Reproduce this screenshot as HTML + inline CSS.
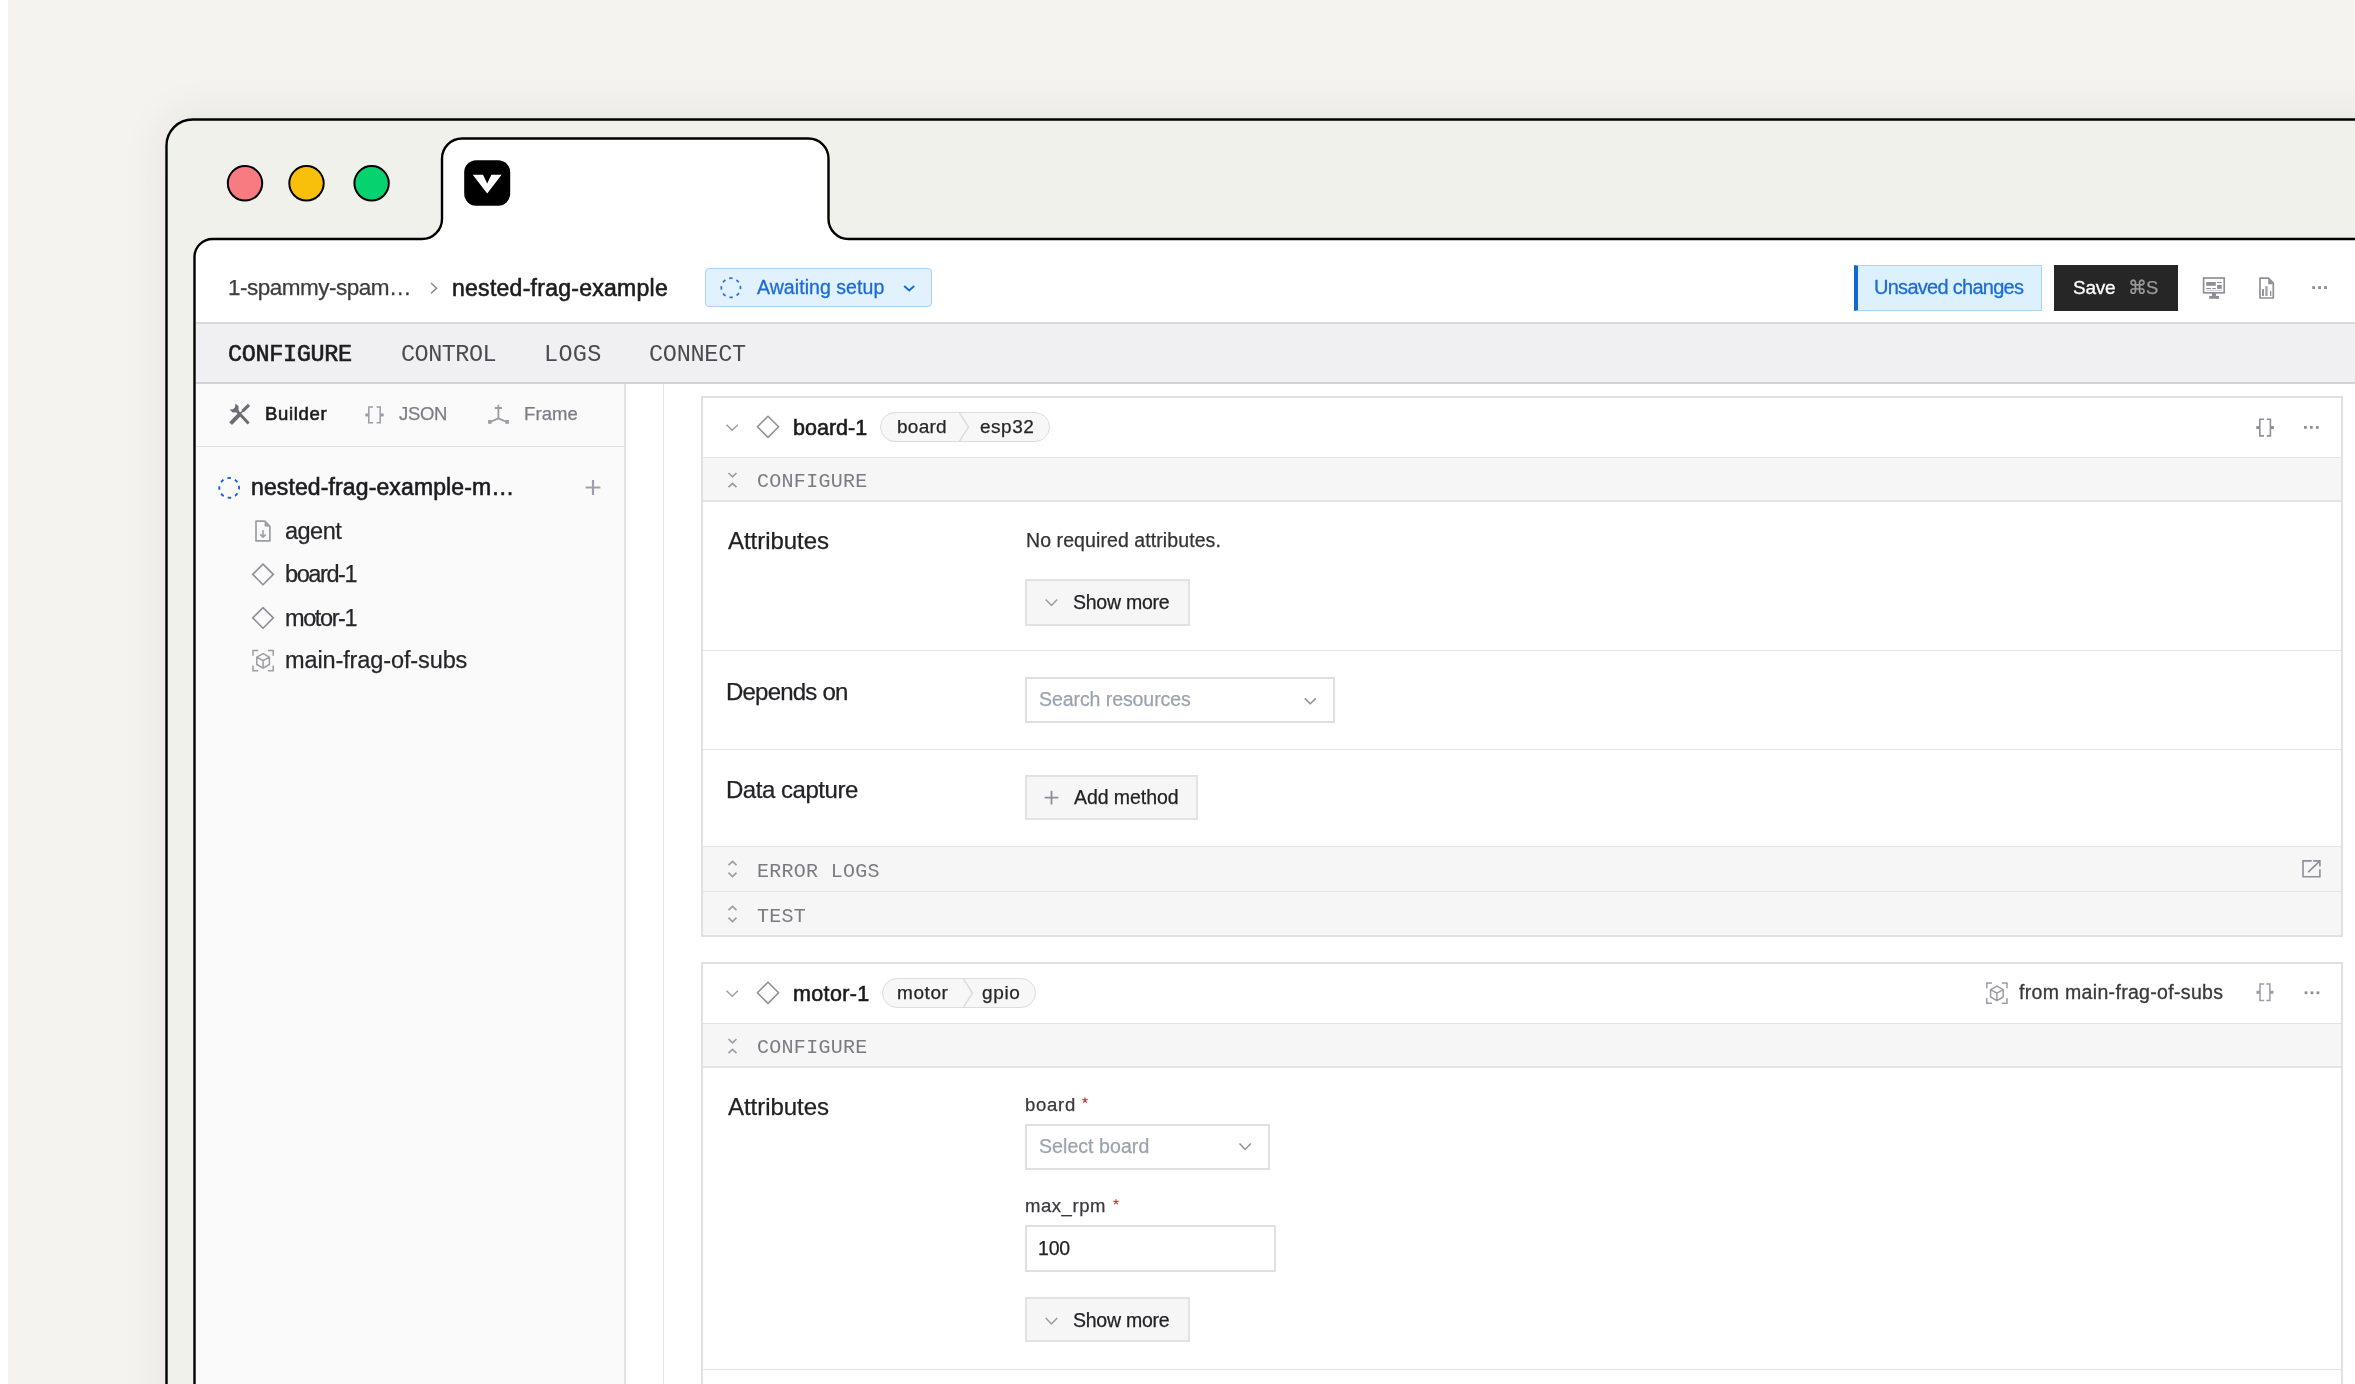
<!DOCTYPE html>
<html><head><meta charset="utf-8"><title>nested-frag-example</title><style>
*{box-sizing:border-box;margin:0;padding:0}
html,body{width:2355px;height:1384px;overflow:hidden;background:#f4f3ef}
.a{position:absolute}
.t{position:absolute;white-space:nowrap;will-change:transform}
</style></head>
<body>
<div class="a" style="left:0;top:0;width:8px;height:1384px;background:#fff"></div>
<div class="a" style="left:166px;top:119px;width:2400px;height:1500px;border-radius:26px;box-shadow:0 0 48px 0 rgba(60,50,30,0.085)"></div>
<svg class="a" style="left:0;top:0" width="2355" height="1384" viewBox="0 0 2355 1384">
<path d="M166.5,1500 L166.5,145.5 A26,26 0 0 1 192.5,119.5 L2500,119.5 L2500,1500 Z" fill="#f1f1ec" stroke="#000" stroke-width="2.4"/>
<path d="M194.5,1500 L194.5,257 A18,18 0 0 1 212.5,239 L422,239 A20,20 0 0 0 442,219 L442,158.5 A20,20 0 0 1 462,138.5 L808.5,138.5 A20,20 0 0 1 828.5,158.5 L828.5,219 A20,20 0 0 0 848.5,239 L2500,239 L2500,1500 Z" fill="#fff" stroke="#000" stroke-width="2.4"/>
<circle cx="245" cy="183.3" r="17.2" fill="#f87b82" stroke="#000" stroke-width="2"/>
<circle cx="306.5" cy="183.3" r="17.2" fill="#f9c00b" stroke="#000" stroke-width="2"/>
<circle cx="371.6" cy="183.3" r="17.2" fill="#05d36f" stroke="#000" stroke-width="2"/>
<rect x="464.2" y="160.3" width="46" height="45.5" rx="12" fill="#000"/>
<path d="M472.7,174.7 L483,174.7 L487.2,183.5 L491.4,174.7 L501.6,174.7 L487.2,193.4 Z" fill="#fff"/>
</svg>
<div class="a" style="left:195.6px;top:322px;width:2200px;height:1.5px;background:#dadadd"></div>
<div class="a" style="left:195.6px;top:323.5px;width:2200px;height:58.5px;background:#f0f0f2"></div>
<div class="a" style="left:195.6px;top:382px;width:2200px;height:2px;background:#d3d3d6"></div>
<div class="a" style="left:195.6px;top:384px;width:428.4px;height:1100px;background:#fafafa"></div>
<div class="a" style="left:624px;top:384px;width:2px;height:1100px;background:#e2e2e5"></div>
<div class="a" style="left:195.6px;top:446px;width:428.4px;height:1.3px;background:#e3e3e6"></div>
<div class="a" style="left:663px;top:384px;width:1.2px;height:1100px;background:#e6e6e9"></div>
<div class="a" style="left:705.3px;top:268.3px;width:226.5px;height:38.7px;border:1.5px solid #a9d0f6;background:#e1f1fd;border-radius:4px"></div>
<div class="a" style="left:1854px;top:265.2px;width:188px;height:45.4px;border:1.5px solid #a9d4f8;border-left:4px solid #1266d6;background:#ddf0fd"></div>
<div class="a" style="left:2054px;top:265.2px;width:123.7px;height:45.4px;background:#262626"></div>
<div class="a" style="left:701px;top:396.2px;width:1641.5px;height:540.5px;border:2px solid #e1e1e4;background:#fff"></div>
<div class="a" style="left:703px;top:457px;width:1637.5px;height:1.2px;background:#e3e3e6"></div>
<div class="a" style="left:703px;top:458.2px;width:1637.5px;height:42px;background:#f6f6f6"></div>
<div class="a" style="left:703px;top:500px;width:1637.5px;height:1.5px;background:#e3e3e6"></div>
<div class="a" style="left:703px;top:650.3px;width:1637.5px;height:1.2px;background:#e6e6e9"></div>
<div class="a" style="left:703px;top:748.5px;width:1637.5px;height:1.2px;background:#e6e6e9"></div>
<div class="a" style="left:703px;top:846.2px;width:1637.5px;height:1.2px;background:#e6e6e9"></div>
<div class="a" style="left:703px;top:847.4px;width:1637.5px;height:87.5px;background:#f6f6f6"></div>
<div class="a" style="left:703px;top:891px;width:1637.5px;height:1.2px;background:#e6e6e9"></div>
<div class="a" style="left:701px;top:962.2px;width:1641.5px;height:600px;border:2px solid #e1e1e4;background:#fff"></div>
<div class="a" style="left:703px;top:1023px;width:1637.5px;height:1.2px;background:#e3e3e6"></div>
<div class="a" style="left:703px;top:1024.2px;width:1637.5px;height:42px;background:#f6f6f6"></div>
<div class="a" style="left:703px;top:1066px;width:1637.5px;height:1.5px;background:#e3e3e6"></div>
<div class="a" style="left:703px;top:1368.6px;width:1637.5px;height:1.2px;background:#e6e6e9"></div>
<div class="a" style="left:1025.1px;top:579.2px;width:164.6px;height:46.5px;background:#f6f6f6;border:2px solid #e2e2e5"></div>
<div class="a" style="left:1025.1px;top:677.4px;width:309.7px;height:45.4px;background:#fff;border:2px solid #e0e0e3"></div>
<div class="a" style="left:1025.1px;top:774.7px;width:173.2px;height:45.3px;background:#f6f6f6;border:2px solid #e2e2e5"></div>
<div class="a" style="left:1025.1px;top:1123.5px;width:244.7px;height:46.1px;background:#fff;border:2px solid #e0e0e3"></div>
<div class="a" style="left:1025.1px;top:1225.4px;width:250.8px;height:46.2px;background:#fff;border:2px solid #e0e0e3"></div>
<div class="a" style="left:1025.1px;top:1297.4px;width:164.6px;height:45.0px;background:#f6f6f6;border:2px solid #e2e2e5"></div>
<div class="a" style="left:880.2px;top:412.1px;width:169.6px;height:30.2px;background:#f7f7f7;border:1.5px solid #dcdcdf;border-radius:15.1px"></div><svg class="a" style="left:958px;top:412.1px" width="14" height="30.2"><path d="M1.5,1 L10.5,15.1 L1.5,29.2" fill="none" stroke="#dcdcdf" stroke-width="1.5"/></svg>
<div class="a" style="left:881.6px;top:978.1px;width:154.2px;height:30.2px;background:#f7f7f7;border:1.5px solid #dcdcdf;border-radius:15.1px"></div><svg class="a" style="left:961.5px;top:978.1px" width="14" height="30.2"><path d="M1.5,1 L10.5,15.1 L1.5,29.2" fill="none" stroke="#dcdcdf" stroke-width="1.5"/></svg>
<svg class="a" style="left:0;top:0" width="2355" height="1384" viewBox="0 0 2355 1384"><path d="M431,283 L436.6,288.2 L431,293.4" fill="none" stroke="#8a8a93" stroke-width="1.5"/>
<circle cx="730.9" cy="287.8" r="9.6" fill="none" stroke="#2a72da" stroke-width="1.7" stroke-dasharray="3.393 4.147" transform="rotate(-12 730.9 287.8)"/>
<path d="M904.2,286 L909.2,290.4 L914.2,286" fill="none" stroke="#1a6bd8" stroke-width="2"/>
<rect x="2203.6" y="278" width="20.6" height="14.8" fill="none" stroke="#8f8f9a" stroke-width="1.7"/>
<rect x="2212" y="292.8" width="4.1" height="3.4" fill="#8f8f9a"/><rect x="2209.2" y="296" width="9.8" height="2.8" fill="#8f8f9a"/>
<rect x="2206.2" y="282" width="9.6" height="3.8" fill="#8f8f9a"/><rect x="2217.1" y="282" width="4.7" height="1.1" fill="#8f8f9a"/><rect x="2217.1" y="285" width="4.7" height="3.9" fill="#8f8f9a"/>
<rect x="2206.2" y="288" width="4.8" height="1.1" fill="#8f8f9a"/><rect x="2212.3" y="288" width="3.5" height="1.1" fill="#8f8f9a"/><rect x="2206.2" y="290" width="15.6" height="0.8" fill="#c8c8cf"/>
<path d="M2268.4,278.1 H2260 V298 H2273.3 V283.2 Z" fill="none" stroke="#8f8f9a" stroke-width="1.7" stroke-linejoin="round"/>
<path d="M2268.2,278.6 V284.2 H2273.3 Z" fill="#8f8f9a"/>
<rect x="2262" y="289" width="1.9" height="7" fill="#8f8f9a"/><rect x="2265.2" y="286.2" width="2.5" height="9.8" fill="#a6a6b0"/><rect x="2270" y="290.9" width="1.3" height="5.1" fill="#8f8f9a"/>
<rect x="2312.2" y="286.15000000000003" width="2.9" height="2.9" fill="#8f8f9a"/><rect x="2318.1" y="286.15000000000003" width="2.9" height="2.9" fill="#8f8f9a"/><rect x="2324.0" y="286.15000000000003" width="2.9" height="2.9" fill="#8f8f9a"/>
<path d="M237,411 L248.6,423.6" stroke="#6c6c75" stroke-width="2.9" fill="none"/>
<path d="M229.6,409.4 L232.6,412.4 L236.8,412.2 L238.6,410.4 L238.5,406.3 L235.4,403.6 L235.0,407.3 L233.0,409.2 Z" fill="#6c6c75"/>
<path d="M249,404.8 L242.6,411.2" stroke="#6c6c75" stroke-width="3.3" fill="none"/>
<path d="M242.8,411 L239.4,414.4" stroke="#6c6c75" stroke-width="1.6" fill="none"/>
<path d="M239.6,414.4 L230.6,423.6" stroke="#6c6c75" stroke-width="3.9" fill="none"/>
<path d="M373.0,407.09999999999997 H368.8 V422.8 H373.0 M376.59999999999997,407.09999999999997 H380.2 V422.8 H376.59999999999997" fill="none" stroke="#9c9ca7" stroke-width="1.5"/><rect x="365.3" y="413.45" width="3.5000000000000115" height="3" fill="#9c9ca7"/><rect x="380.2" y="413.45" width="3.5000000000000115" height="3" fill="#9c9ca7"/>
<path d="M498.4,404.8 V418.4 L490.2,422 M498.4,418.4 L506.8,422 M494.8,408 H502" fill="none" stroke="#9c9ca7" stroke-width="1.8"/>
<rect x="488.1" y="420" width="3.5" height="3.8" fill="#9c9ca7"/><rect x="505.3" y="420" width="3.6" height="3.8" fill="#9c9ca7"/>
<circle cx="229.2" cy="487.9" r="9.9" fill="none" stroke="#1862d8" stroke-width="1.9" stroke-dasharray="3.499 4.276" transform="rotate(-12 229.2 487.9)"/>
<path d="M593,480.1 V494.9 M585.6,487.5 H600.4" fill="none" stroke="#a0a0aa" stroke-width="2.2"/>
<path d="M264.8,521.2 H256 V540.9 H269.9 V526.4 Z" fill="none" stroke="#9c9ca7" stroke-width="1.7" stroke-linejoin="round"/>
<path d="M264.6,521.4 V526.6 H269.8 Z" fill="#9c9ca7"/>
<path d="M263,530 V537 M260.2,534.4 L263,537.2 L265.8,534.4" fill="none" stroke="#9c9ca7" stroke-width="1.5"/>
<path d="M263,564.1 L273.3,574.4 L263,584.6999999999999 L252.7,574.4 Z" fill="none" stroke="#8f8f9a" stroke-width="1.6" stroke-linejoin="round"/>
<path d="M263,607.6 L273.3,617.9 L263,628.1999999999999 L252.7,617.9 Z" fill="none" stroke="#8f8f9a" stroke-width="1.6" stroke-linejoin="round"/>
<path d="M253.0,655.8 V650.5999999999999 H258.2 M268.0,650.5999999999999 H273.2 V655.8 M253.0,665.5999999999999 V670.8 H258.2 M268.0,670.8 H273.2 V665.5999999999999" fill="none" stroke="#9c9ca7" stroke-width="1.5"/><path d="M263.09999999999997,653.6999999999999 L269.4,657.0999999999999 L269.4,664.4999999999999 L263.09999999999997,668.0999999999999 L256.79999999999995,664.4999999999999 L256.79999999999995,657.0999999999999 Z M256.79999999999995,657.0999999999999 L263.09999999999997,660.6999999999999 L269.4,657.0999999999999 M263.09999999999997,660.6999999999999 V668.0999999999999" fill="none" stroke="#9c9ca7" stroke-width="1.5" stroke-linejoin="round"/>
<path d="M726.5,424.8 L732.2,430.2 L737.9000000000001,424.8" fill="none" stroke="#9c9ca7" stroke-width="1.5"/>
<path d="M768,416.2 L778.6,426.8 L768,437.40000000000003 L757.4,426.8 Z" fill="none" stroke="#8f8f9a" stroke-width="1.6" stroke-linejoin="round"/>
<path d="M728.5,473.0 L732.5,476.8 L736.5,473.0 M728.5,487.09999999999997 L732.5,483.3 L736.5,487.09999999999997" fill="none" stroke="#9c9ca7" stroke-width="1.7"/>
<path d="M726.5,990.8 L732.2,996.2 L737.9000000000001,990.8" fill="none" stroke="#9c9ca7" stroke-width="1.5"/>
<path d="M768,982.1999999999999 L778.6,992.8 L768,1003.4 L757.4,992.8 Z" fill="none" stroke="#8f8f9a" stroke-width="1.6" stroke-linejoin="round"/>
<path d="M728.5,1039.0 L732.5,1042.8 L736.5,1039.0 M728.5,1053.1000000000001 L732.5,1049.3 L736.5,1053.1000000000001" fill="none" stroke="#9c9ca7" stroke-width="1.7"/>
<path d="M2264.0,419.2 H2259.8 V435.90000000000003 H2264.0 M2266.7999999999997,419.2 H2270.3999999999996 V435.90000000000003 H2266.7999999999997" fill="none" stroke="#8f8f9a" stroke-width="1.6"/><rect x="2256.3" y="426.05" width="3.500000000000182" height="3" fill="#8f8f9a"/><rect x="2270.3999999999996" y="426.05" width="3.500000000000182" height="3" fill="#8f8f9a"/>
<rect x="2304.0" y="426.0" width="2.8" height="2.8" fill="#8f8f9a"/><rect x="2309.95" y="426.0" width="2.8" height="2.8" fill="#8f8f9a"/><rect x="2315.9" y="426.0" width="2.8" height="2.8" fill="#8f8f9a"/>
<path d="M2264.2,983.9 H2260.0 V1000.6 H2264.2 M2266.2999999999997,983.9 H2269.8999999999996 V1000.6 H2266.2999999999997" fill="none" stroke="#9c9ca7" stroke-width="1.5"/><rect x="2256.5" y="990.75" width="3.500000000000182" height="3" fill="#9c9ca7"/><rect x="2269.8999999999996" y="990.75" width="3.500000000000182" height="3" fill="#9c9ca7"/>
<rect x="2304.6" y="991.4" width="2.8" height="2.8" fill="#8f8f9a"/><rect x="2310.5499999999997" y="991.4" width="2.8" height="2.8" fill="#8f8f9a"/><rect x="2316.5" y="991.4" width="2.8" height="2.8" fill="#8f8f9a"/>
<path d="M1986.8,988.3 V983.0999999999999 H1992.0 M2001.8,983.0999999999999 H2007 V988.3 M1986.8,998.0999999999999 V1003.3 H1992.0 M2001.8,1003.3 H2007 V998.0999999999999" fill="none" stroke="#9c9ca7" stroke-width="1.5"/><path d="M1996.9,986.1999999999999 L2003.2,989.5999999999999 L2003.2,996.9999999999999 L1996.9,1000.5999999999999 L1990.6000000000001,996.9999999999999 L1990.6000000000001,989.5999999999999 Z M1990.6000000000001,989.5999999999999 L1996.9,993.1999999999999 L2003.2,989.5999999999999 M1996.9,993.1999999999999 V1000.5999999999999" fill="none" stroke="#9c9ca7" stroke-width="1.5" stroke-linejoin="round"/>
<path d="M1045.7,599.5999999999999 L1051.45,605.5 L1057.2,599.5999999999999" fill="none" stroke="#9a9aa5" stroke-width="1.5"/>
<path d="M1045.7,1318.1 L1051.45,1324.0 L1057.2,1318.1" fill="none" stroke="#9a9aa5" stroke-width="1.5"/>
<path d="M1304.8,698.4 L1310.3,703.8000000000001 L1315.8,698.4" fill="none" stroke="#8e8e99" stroke-width="1.5"/>
<path d="M1239.5,1143.5 L1245.15,1149.4 L1250.8000000000002,1143.5" fill="none" stroke="#8e8e99" stroke-width="1.5"/>
<path d="M1051.5,790.8000000000001 V804.4 M1044.7,797.6 H1058.3" fill="none" stroke="#8e8e99" stroke-width="1.8"/>
<path d="M728.5,865.2 L732.5,861.4000000000001 L736.5,865.2 M728.5,872.7 L732.5,876.5 L736.5,872.7" fill="none" stroke="#9c9ca7" stroke-width="1.7"/>
<path d="M728.5,910.2 L732.5,906.4000000000001 L736.5,910.2 M728.5,917.7 L732.5,921.5 L736.5,917.7" fill="none" stroke="#9c9ca7" stroke-width="1.7"/>
<path d="M2311.8,860.9 H2303 V876.8 H2319.9 V869.2 M2313.2,860.9 H2319.9 V866.6 M2308.2,872.2 L2319.4,861.4" fill="none" stroke="#8f8f9a" stroke-width="1.6"/>
<path d="M1085,1100.3 L1085.00,1097.50 M1085,1100.3 L1087.66,1099.43 M1085,1100.3 L1082.34,1099.43 M1085,1100.3 L1083.35,1102.57 M1085,1100.3 L1086.65,1102.57" fill="none" stroke="#e0303a" stroke-width="1.2"/>
<path d="M1116,1202 L1116.00,1199.20 M1116,1202 L1118.66,1201.13 M1116,1202 L1113.34,1201.13 M1116,1202 L1114.35,1204.27 M1116,1202 L1117.65,1204.27" fill="none" stroke="#e0303a" stroke-width="1.2"/></svg>
<div class="t" style="left:228.20px;top:272.30px;font-family:'Liberation Sans';font-size:22.5px;line-height:31px;font-weight:400;color:#3b3b40;letter-spacing:-0.502px;-webkit-text-stroke:0.25px #3b3b40">1-spammy-spam…</div>
<div class="t" style="left:451.70px;top:271.73px;font-family:'Liberation Sans';font-size:23px;line-height:32px;font-weight:400;color:#1c1c20;letter-spacing:0.269px;-webkit-text-stroke:0.6px #1c1c20">nested-frag-example</div>
<div class="t" style="left:757.00px;top:273.54px;font-family:'Liberation Sans';font-size:19.5px;line-height:27px;font-weight:400;color:#1a6bd8;letter-spacing:0.059px;-webkit-text-stroke:0.3px #1a6bd8">Awaiting setup</div>
<div class="t" style="left:1873.60px;top:273.27px;font-family:'Liberation Sans';font-size:20px;line-height:28px;font-weight:400;color:#1d6cd5;letter-spacing:-0.722px;-webkit-text-stroke:0.3px #1d6cd5">Unsaved changes</div>
<div class="t" style="left:2073.00px;top:274.11px;font-family:'Liberation Sans';font-size:19px;line-height:27px;font-weight:400;color:#ffffff;letter-spacing:-0.247px;-webkit-text-stroke:0.3px #ffffff">Save</div>
<div class="t" style="left:2127.80px;top:275.19px;font-family:'Liberation Sans';font-size:18.5px;line-height:26px;font-weight:400;color:#9b9b9b;letter-spacing:-1.000px;-webkit-text-stroke:0.25px #9b9b9b">⌘S</div>
<div class="t" style="left:228.00px;top:338.05px;font-family:'Liberation Mono';font-size:23.5px;line-height:33px;font-weight:400;color:#1c1c20;letter-spacing:-0.352px;-webkit-text-stroke:0.6px #1c1c20">CONFIGURE</div>
<div class="t" style="left:400.50px;top:338.05px;font-family:'Liberation Mono';font-size:23.5px;line-height:33px;font-weight:400;color:#4a4a50;letter-spacing:-0.519px">CONTROL</div>
<div class="t" style="left:543.70px;top:338.05px;font-family:'Liberation Mono';font-size:23.5px;line-height:33px;font-weight:400;color:#4a4a50;letter-spacing:0.331px">LOGS</div>
<div class="t" style="left:649.00px;top:338.05px;font-family:'Liberation Mono';font-size:23.5px;line-height:33px;font-weight:400;color:#4a4a50;letter-spacing:-0.269px">CONNECT</div>
<div class="t" style="left:264.60px;top:401.29px;font-family:'Liberation Sans';font-size:18.5px;line-height:26px;font-weight:400;color:#1c1c20;letter-spacing:0.662px;-webkit-text-stroke:0.6px #1c1c20">Builder</div>
<div class="t" style="left:399.30px;top:401.29px;font-family:'Liberation Sans';font-size:18.5px;line-height:26px;font-weight:400;color:#7c7c86;letter-spacing:-0.326px;-webkit-text-stroke:0.25px #7c7c86">JSON</div>
<div class="t" style="left:523.70px;top:401.29px;font-family:'Liberation Sans';font-size:18.5px;line-height:26px;font-weight:400;color:#7c7c86;letter-spacing:0.085px;-webkit-text-stroke:0.25px #7c7c86">Frame</div>
<div class="t" style="left:250.50px;top:471.03px;font-family:'Liberation Sans';font-size:23px;line-height:32px;font-weight:400;color:#1c1c20;letter-spacing:0.121px;-webkit-text-stroke:0.6px #1c1c20">nested-frag-example-m…</div>
<div class="t" style="left:284.80px;top:514.85px;font-family:'Liberation Sans';font-size:23.5px;line-height:33px;font-weight:400;color:#26262a;letter-spacing:-0.520px;-webkit-text-stroke:0.25px #26262a">agent</div>
<div class="t" style="left:284.80px;top:557.85px;font-family:'Liberation Sans';font-size:23.5px;line-height:33px;font-weight:400;color:#26262a;letter-spacing:-1.405px;-webkit-text-stroke:0.25px #26262a">board-1</div>
<div class="t" style="left:284.80px;top:601.85px;font-family:'Liberation Sans';font-size:23.5px;line-height:33px;font-weight:400;color:#26262a;letter-spacing:-1.399px;-webkit-text-stroke:0.25px #26262a">motor-1</div>
<div class="t" style="left:284.80px;top:644.35px;font-family:'Liberation Sans';font-size:23.5px;line-height:33px;font-weight:400;color:#26262a;letter-spacing:-0.112px;-webkit-text-stroke:0.25px #26262a">main-frag-of-subs</div>
<div class="t" style="left:793.20px;top:412.55px;font-family:'Liberation Sans';font-size:21.5px;line-height:30px;font-weight:400;color:#1c1c20;letter-spacing:0.009px;-webkit-text-stroke:0.6px #1c1c20">board-1</div>
<div class="t" style="left:897.00px;top:412.61px;font-family:'Liberation Sans';font-size:19px;line-height:27px;font-weight:400;color:#26262a;letter-spacing:0.268px;-webkit-text-stroke:0.25px #26262a">board</div>
<div class="t" style="left:979.90px;top:412.61px;font-family:'Liberation Sans';font-size:19px;line-height:27px;font-weight:400;color:#26262a;letter-spacing:0.525px;-webkit-text-stroke:0.25px #26262a">esp32</div>
<div class="t" style="left:756.50px;top:468.38px;font-family:'Liberation Mono';font-size:20px;line-height:28px;font-weight:400;color:#7a7a83;letter-spacing:0.286px">CONFIGURE</div>
<div class="t" style="left:728.40px;top:524.38px;font-family:'Liberation Sans';font-size:24px;line-height:34px;font-weight:400;color:#222226;letter-spacing:-0.042px;-webkit-text-stroke:0.25px #222226">Attributes</div>
<div class="t" style="left:1025.70px;top:527.44px;font-family:'Liberation Sans';font-size:19.5px;line-height:27px;font-weight:400;color:#333338;letter-spacing:0.086px;-webkit-text-stroke:0.25px #333338">No required attributes.</div>
<div class="t" style="left:1073.30px;top:588.84px;font-family:'Liberation Sans';font-size:19.5px;line-height:27px;font-weight:400;color:#222226;letter-spacing:-0.247px;-webkit-text-stroke:0.25px #222226">Show more</div>
<div class="t" style="left:726.40px;top:675.08px;font-family:'Liberation Sans';font-size:24px;line-height:34px;font-weight:400;color:#222226;letter-spacing:-0.787px;-webkit-text-stroke:0.25px #222226">Depends on</div>
<div class="t" style="left:1039.00px;top:685.74px;font-family:'Liberation Sans';font-size:19.5px;line-height:27px;font-weight:400;color:#9ba3af;letter-spacing:-0.071px;-webkit-text-stroke:0.25px #9ba3af">Search resources</div>
<div class="t" style="left:726.40px;top:772.88px;font-family:'Liberation Sans';font-size:24px;line-height:34px;font-weight:400;color:#222226;letter-spacing:-0.461px;-webkit-text-stroke:0.25px #222226">Data capture</div>
<div class="t" style="left:1074.20px;top:783.54px;font-family:'Liberation Sans';font-size:19.5px;line-height:27px;font-weight:400;color:#222226;letter-spacing:-0.068px;-webkit-text-stroke:0.25px #222226">Add method</div>
<div class="t" style="left:757.30px;top:858.18px;font-family:'Liberation Mono';font-size:20px;line-height:28px;font-weight:400;color:#7a7a83;letter-spacing:0.276px">ERROR LOGS</div>
<div class="t" style="left:757.30px;top:902.68px;font-family:'Liberation Mono';font-size:20px;line-height:28px;font-weight:400;color:#7a7a83;letter-spacing:0.265px">TEST</div>
<div class="t" style="left:793.20px;top:978.55px;font-family:'Liberation Sans';font-size:21.5px;line-height:30px;font-weight:400;color:#1c1c20;letter-spacing:0.364px;-webkit-text-stroke:0.6px #1c1c20">motor-1</div>
<div class="t" style="left:897.40px;top:978.61px;font-family:'Liberation Sans';font-size:19px;line-height:27px;font-weight:400;color:#26262a;letter-spacing:0.590px;-webkit-text-stroke:0.25px #26262a">motor</div>
<div class="t" style="left:981.70px;top:978.61px;font-family:'Liberation Sans';font-size:19px;line-height:27px;font-weight:400;color:#26262a;letter-spacing:0.648px;-webkit-text-stroke:0.25px #26262a">gpio</div>
<div class="t" style="left:756.50px;top:1034.38px;font-family:'Liberation Mono';font-size:20px;line-height:28px;font-weight:400;color:#7a7a83;letter-spacing:0.286px">CONFIGURE</div>
<div class="t" style="left:728.40px;top:1090.38px;font-family:'Liberation Sans';font-size:24px;line-height:34px;font-weight:400;color:#222226;letter-spacing:-0.042px;-webkit-text-stroke:0.25px #222226">Attributes</div>
<div class="t" style="left:2019.20px;top:978.74px;font-family:'Liberation Sans';font-size:19.5px;line-height:27px;font-weight:400;color:#38383d;letter-spacing:0.321px;-webkit-text-stroke:0.3px #38383d">from main-frag-of-subs</div>
<div class="t" style="left:1025.00px;top:1091.59px;font-family:'Liberation Sans';font-size:18.5px;line-height:26px;font-weight:400;color:#38383d;letter-spacing:0.743px;-webkit-text-stroke:0.25px #38383d">board</div>
<div class="t" style="left:1039.00px;top:1132.74px;font-family:'Liberation Sans';font-size:19.5px;line-height:27px;font-weight:400;color:#9ba3af;letter-spacing:0.069px;-webkit-text-stroke:0.25px #9ba3af">Select board</div>
<div class="t" style="left:1025.00px;top:1193.29px;font-family:'Liberation Sans';font-size:18.5px;line-height:26px;font-weight:400;color:#38383d;letter-spacing:0.552px;-webkit-text-stroke:0.25px #38383d">max_rpm</div>
<div class="t" style="left:1038.10px;top:1234.54px;font-family:'Liberation Sans';font-size:19.5px;line-height:27px;font-weight:400;color:#222226;letter-spacing:-0.195px;-webkit-text-stroke:0.25px #222226">100</div>
<div class="t" style="left:1073.30px;top:1307.34px;font-family:'Liberation Sans';font-size:19.5px;line-height:27px;font-weight:400;color:#222226;letter-spacing:-0.247px;-webkit-text-stroke:0.25px #222226">Show more</div>
</body></html>
